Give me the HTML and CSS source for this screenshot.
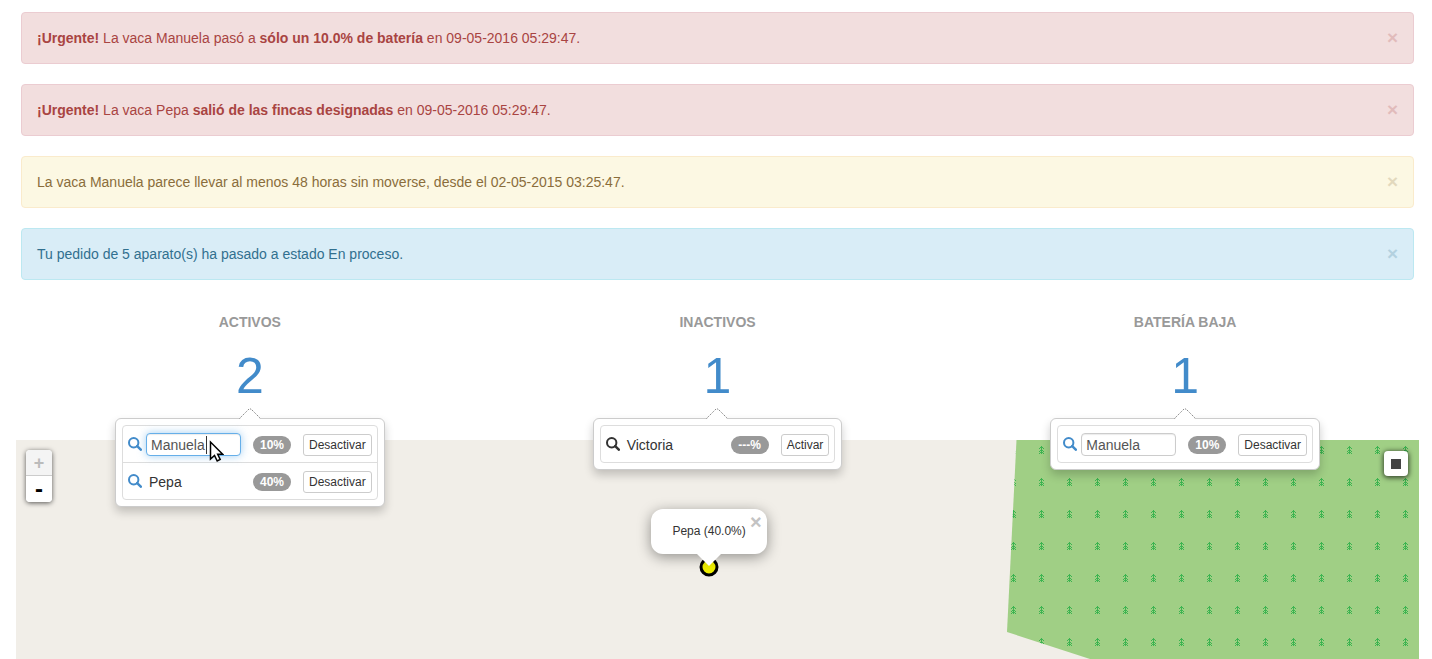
FILE: index.html
```html
<!DOCTYPE html>
<html lang="es">
<head>
<meta charset="utf-8">
<title>Panel de vacas</title>
<link rel="stylesheet" href="styles.css">
</head>
<body>
<svg class="defs" width="0" height="0" aria-hidden="true">
  <symbol id="search" viewBox="0 0 14 14">
    <circle cx="5.700" cy="5.700" r="4.700" fill="none" stroke="currentColor" stroke-width="2"/>
    <path d="M9.200 9.200l3.600 3.500" fill="none" stroke="currentColor" stroke-width="2.500" stroke-linecap="round"/>
  </symbol>
</svg>

<section class="alerts">
  <div class="alert danger" role="alert">
    <p><strong>¡Urgente!</strong> La vaca Manuela pasó a <strong>sólo un 10.0% de batería</strong> en 09-05-2016 05:29:47.</p>
    <button class="close" type="button" aria-label="Cerrar">×</button>
  </div>
  <div class="alert danger" role="alert">
    <p><strong>¡Urgente!</strong> La vaca Pepa <strong>salió de las fincas designadas</strong> en 09-05-2016 05:29:47.</p>
    <button class="close" type="button" aria-label="Cerrar">×</button>
  </div>
  <div class="alert warning" role="alert">
    <p>La vaca Manuela parece llevar al menos 48 horas sin moverse, desde el 02-05-2015 03:25:47.</p>
    <button class="close" type="button" aria-label="Cerrar">×</button>
  </div>
  <div class="alert info" role="alert">
    <p>Tu pedido de 5 aparato(s) ha pasado a estado En proceso.</p>
    <button class="close" type="button" aria-label="Cerrar">×</button>
  </div>
</section>

<section class="stats">
  <div class="stat">
    <h2>ACTIVOS</h2>
    <a class="count" href="#activos">2</a>
    <div class="drop">
      <div class="popover">
        <svg class="tip" width="22" height="11" viewBox="0 0 22 11" aria-hidden="true"><path d="M0 12L10 1h2l10 11z" fill="#fff"/><path d="M0.5 10.5L10 1h2l9.500 9.500" fill="none" stroke="#888" stroke-dasharray="1.400 1"/></svg>
        <ul class="list">
          <li>
            <a class="find" href="#manuela" aria-label="Localizar a Manuela"><svg width="14" height="14"><use href="#search"/></svg></a>
            <span class="name field">
              <input class="active" type="text" value="Manuela" aria-label="Nombre">
              <svg class="pointer" width="18" height="30" viewBox="0 0 18 30" aria-hidden="true"><path d="M0.5 3v18" stroke="#333"/><path d="M4.500 9v17l4-3.500 2.700 5.500 3-1.500-2.500-5.200h5z" fill="#fff" stroke="#000" stroke-width="1.500"/></svg>
            </span>
            <span class="badge">10%</span>
            <button class="toggle" type="button">Desactivar</button>
          </li>
          <li>
            <a class="find" href="#pepa" aria-label="Localizar a Pepa"><svg width="14" height="14"><use href="#search"/></svg></a>
            <span class="name">Pepa</span>
            <span class="badge">40%</span>
            <button class="toggle" type="button">Desactivar</button>
          </li>
        </ul>
      </div>
    </div>
  </div>
  <div class="stat">
    <h2>INACTIVOS</h2>
    <a class="count" href="#inactivos">1</a>
    <div class="drop">
      <div class="popover">
        <svg class="tip" width="22" height="11" viewBox="0 0 22 11" aria-hidden="true"><path d="M0 12L10 1h2l10 11z" fill="#fff"/><path d="M0.5 10.5L10 1h2l9.500 9.500" fill="none" stroke="#888" stroke-dasharray="1.400 1"/></svg>
        <ul class="list">
          <li>
            <span class="find off"><svg width="14" height="14"><use href="#search"/></svg></span>
            <span class="name">Victoria</span>
            <span class="badge">---%</span>
            <button class="toggle" type="button">Activar</button>
          </li>
        </ul>
      </div>
    </div>
  </div>
  <div class="stat">
    <h2>BATERÍA BAJA</h2>
    <a class="count" href="#bateria">1</a>
    <div class="drop">
      <div class="popover">
        <svg class="tip" width="22" height="11" viewBox="0 0 22 11" aria-hidden="true"><path d="M0 12L10 1h2l10 11z" fill="#fff"/><path d="M0.5 10.5L10 1h2l9.500 9.500" fill="none" stroke="#888" stroke-dasharray="1.400 1"/></svg>
        <ul class="list">
          <li>
            <a class="find" href="#manuela" aria-label="Localizar a Manuela"><svg width="14" height="14"><use href="#search"/></svg></a>
            <span class="name field"><input type="text" value="Manuela" aria-label="Nombre"></span>
            <span class="badge">10%</span>
            <button class="toggle" type="button">Desactivar</button>
          </li>
        </ul>
      </div>
    </div>
  </div>
</section>

<main class="map">
  <svg class="forest" width="412" height="219" viewBox="0 0 412 219" aria-hidden="true">
    <defs>
      <pattern id="trees" x="20" y="6" width="28" height="32" patternUnits="userSpaceOnUse">
        <path fill="#3cb450" shape-rendering="crispEdges" d="M14 0h1v8h-1zM13 1h1v1h-1zM15 1h1v1h-1zM12 2h1v1h-1zM16 2h1v1h-1zM13 4h1v1h-1zM15 4h1v1h-1zM12 5h1v1h-1zM16 5h1v1h-1zM13 6h1v1h-1zM15 6h1v1h-1zM12 7h1v1h-1zM16 7h1v1h-1z"/>
      </pattern>
    </defs>
    <path d="M9.500 0L0 192l83 27h329V0z" fill="#a0cf85"/>
    <path d="M9.500 0L0 192l83 27h329V0z" fill="url(#trees)"/>
  </svg>

  <div class="zoom">
    <button type="button" disabled aria-label="Acercar">+</button>
    <button class="out" type="button" aria-label="Alejar">-</button>
  </div>
  <button class="fullscreen" type="button" aria-label="Pantalla completa"><span></span></button>

  <div class="place">
    <svg class="marker" width="20" height="20" viewBox="0 0 20 20" aria-hidden="true"><circle cx="10" cy="10" r="8" fill="#ee0" stroke="#000" stroke-width="3"/></svg>
    <div class="popup">
      <span>Pepa (40.0%)</span>
      <button class="dismiss" type="button" aria-label="Cerrar">×</button>
      <svg class="arrow" width="24" height="12" viewBox="0 0 24 12" aria-hidden="true"><path d="M0 0h24L12 12z" fill="#fff"/></svg>
    </div>
  </div>
</main>
</body>
</html>
```
FILE: styles.css
```css
* { box-sizing: border-box; }

body {
  display: flex;
  flex-direction: column;
  min-height: 100vh;
  margin: 0;
  padding: 12px 13px 0 16px;
  background: #fff;
  color: #333;
  font: 14px/20px "Liberation Sans", Arial, sans-serif;
}

button, input { font-family: inherit; margin: 0; }
button { cursor: pointer; }
.defs { position: absolute; }

.alerts {
  display: flex;
  flex-direction: column;
  gap: 20px;
  margin: 0 5px 20px;
}
.alert {
  display: flex;
  justify-content: space-between;
  align-items: center;
  padding: 15px;
  border: 1px solid;
  border-radius: 4px;
}
.alert p { margin: 0; }
.danger { background: #f2dede; border-color: #ebccd1; color: #a94442; }
.warning { background: #fcf8e3; border-color: #faebcc; color: #8a6d3b; }
.info { background: #d9edf7; border-color: #bce8f1; color: #31708f; }
.close {
  padding: 0;
  border: 0;
  background: none;
  color: inherit;
  font-size: 19px;
  font-weight: bold;
  line-height: 20px;
  opacity: .22;
}

.stats {
  display: grid;
  grid-template-columns: repeat(3, 1fr);
}
.stat {
  position: relative;
  display: flex;
  flex-direction: column;
  align-items: center;
  gap: 19px;
  padding: 12px 0 39px;
}
.stat h2 {
  margin: 0;
  color: #999;
  font-size: 14px;
  line-height: 20px;
}
.count {
  color: #428bca;
  font-size: 50px;
  line-height: 50px;
  text-decoration: none;
}
.drop {
  position: absolute;
  z-index: 2;
  top: 100%;
  left: 0;
  right: 0;
  display: flex;
  justify-content: center;
  margin-top: -22px;
}
.popover {
  position: relative;
  padding: 6px;
  border: 1px solid #ccc;
  border-radius: 6px;
  background: #fff;
  box-shadow: 0 5px 10px rgba(0, 0, 0, .2);
}
.tip {
  position: absolute;
  bottom: 100%;
  left: 50%;
  margin-left: -11px;
}
.list {
  margin: 0;
  padding: 0;
  border: 1px solid #ddd;
  border-radius: 4px;
  list-style: none;
}
.list li {
  display: flex;
  align-items: center;
  height: 36px;
  padding: 1px 5px 0;
}
.list li + li { height: 37px; border-top: 1px solid #ddd; }
.find { display: flex; color: #428bca; margin: 0 4px 2px 0; }
.off { color: #333; }
.name {
  position: relative;
  width: 95px;
  margin-right: 12px;
  padding-left: 3px;
}
.field { display: flex; padding: 0; }
.field input {
  width: 100%;
  height: 23px;
  padding: 0 4px;
  border: 1px solid #ccc;
  border-radius: 4px;
  background: #fff;
  box-shadow: inset 0 1px 1px rgba(0, 0, 0, .08);
  color: #555;
  font-size: 14px;
}
.field .active {
  border-color: #66afe9;
  box-shadow: inset 0 1px 1px rgba(0, 0, 0, .08), 0 0 8px rgba(102, 175, 233, .6);
}
.pointer {
  position: absolute;
  top: 0;
  left: 60px;
}
.badge {
  min-width: 38px;
  margin-right: 12px;
  padding: 0 7px;
  border-radius: 9px;
  background: #999;
  color: #fff;
  font-size: 12px;
  font-weight: bold;
  line-height: 18px;
  text-align: center;
}
.toggle {
  height: 22px;
  padding: 0 5px;
  border: 1px solid #ccc;
  border-radius: 3px;
  background: #fff;
  color: #333;
  font-size: 12px;
}

.map {
  position: relative;
  flex: 1;
  min-height: 219px;
  overflow: hidden;
  background: #f1eee8;
}
.forest { position: absolute; top: 0; right: 0; }
.zoom {
  position: absolute;
  top: 10px;
  left: 10px;
  display: flex;
  flex-direction: column;
  width: 26px;
  border-radius: 4px;
  background: #fff;
  box-shadow: 0 1px 5px rgba(0, 0, 0, .65);
}
.zoom button {
  height: 26px;
  padding: 0;
  border: 0;
  border-radius: 0 0 4px 4px;
  background: #fff;
  color: #000;
  font-size: 18px;
  font-weight: bold;
  line-height: 26px;
}
.zoom button:disabled {
  border-bottom: 1px solid #ccc;
  border-radius: 4px 4px 0 0;
  background: #f4f4f4;
  color: #bbb;
}
.zoom .out { font-size: 24px; }
.fullscreen {
  position: absolute;
  top: 11px;
  right: 11px;
  display: flex;
  align-items: center;
  justify-content: center;
  width: 24px;
  height: 25px;
  padding: 0;
  border: 0;
  border-radius: 4px;
  background: #fff;
  box-shadow: 0 1px 5px 1px rgba(0, 0, 0, .65);
}
.fullscreen span { width: 10px; height: 10px; background: #444; }

.place {
  position: absolute;
  top: 127px;
  left: 49.4%;
  display: flex;
  justify-content: center;
  width: 0;
}
.marker { position: absolute; top: -10px; left: -10px; }
.popup {
  position: absolute;
  bottom: 13px;
  padding: 12px 21px 13px;
  border-radius: 12px;
  background: #fff;
  box-shadow: 0 3px 14px rgba(0, 0, 0, .4);
  font-size: 12px;
  white-space: nowrap;
}
.dismiss {
  position: absolute;
  top: 5px;
  right: 4px;
  width: 14px;
  padding: 0;
  border: 0;
  background: none;
  color: #c3c3c3;
  font-size: 20px;
  font-weight: bold;
  line-height: 16px;
}
.arrow {
  position: absolute;
  top: 100%;
  left: 50%;
  margin-left: -12px;
}
```
